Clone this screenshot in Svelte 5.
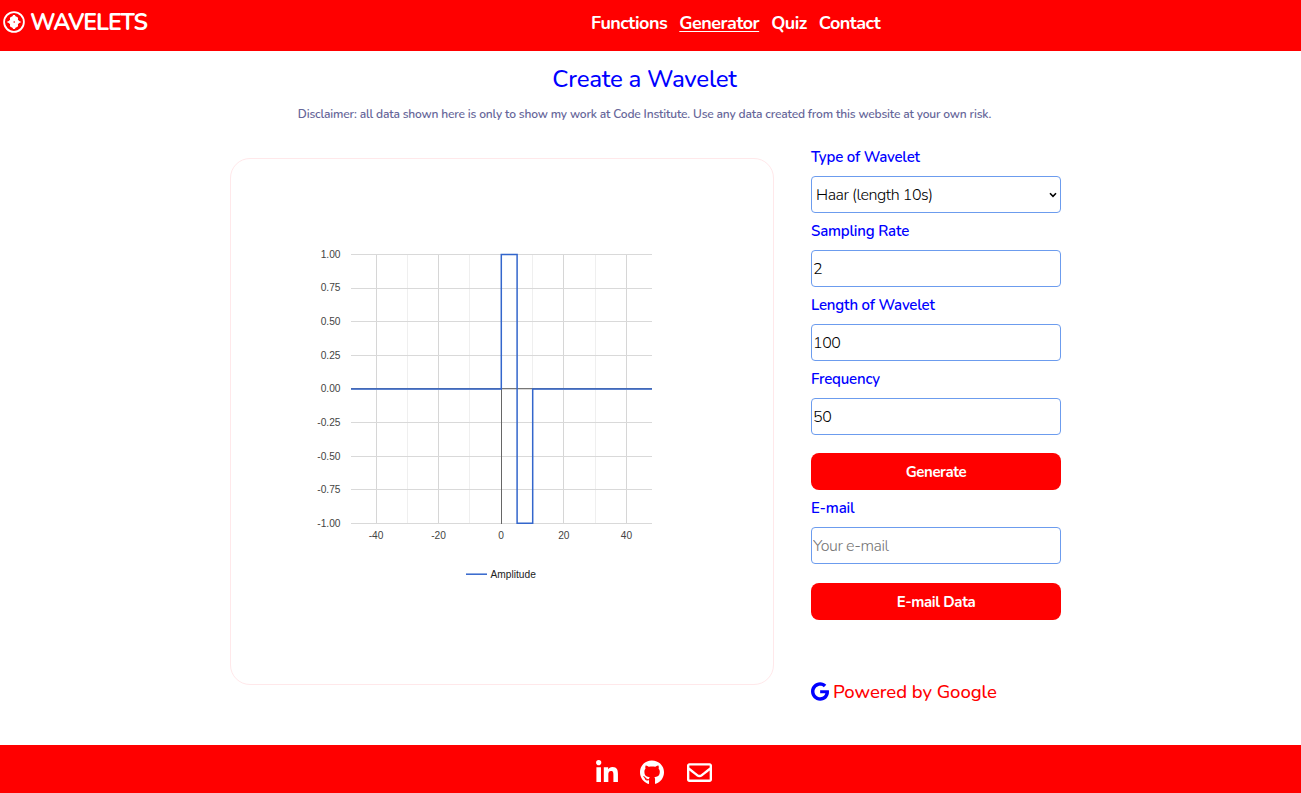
<script>
  const ys = [1, 0.75, 0.5, 0.25, 0, -0.25, -0.5, -0.75, -1];
  const xs = [-40, -20, 0, 20, 40];
  const minor = [-30, -10, 10, 30];
  const px = (v) => 271.2 + v * 3.13;
  const py = (v) => 230.5 - v * 134.5;
  const fields = [
    { label: 'Sampling Rate', value: '2' },
    { label: 'Length of Wavelet', value: '100' },
    { label: 'Frequency', value: '50' }
  ];
</script>

<header>
  <a class="logo" href="#home">
    <svg viewBox="0 0 22 22" width="22" height="22">
      <circle cx="11" cy="11" r="9.9" fill="none" stroke="#fff" stroke-width="1.8" />
      <path fill="#fff" d="M9.2 5.6l1-1.5h1.6l1 1.5 1.6.4.7 1.3-.2 1.5 1.3 1.3 2.2.9-2.2.9-1.3 1.3.2 1.5-.7 1.3-1.6.4-1 1.5h-1.6l-1-1.5-1.6-.4-.7-1.3.2-1.5-1.3-1.3-2.2-.9 2.2-.9 1.3-1.3-.2-1.5.7-1.3z" />
      <circle cx="11.2" cy="11" r=".8" fill="#f00" />
    </svg>
    <span>WAVELETS</span>
  </a>
  <nav>
    <a href="#functions">Functions</a>
    <a class="active" href="#generator">Generator</a>
    <a href="#quiz">Quiz</a>
    <a href="#contact">Contact</a>
  </nav>
</header>

<main>
  <h1>Create a Wavelet</h1>
  <p class="note">Disclaimer: all data shown here is only to show my work at Code Institute. Use any data created from this website at your own risk.</p>
  <div class="content">
    <section class="chart">
      <svg viewBox="0 0 542 525" width="542" height="525">
        {#each minor as v}
          <rect x={Math.floor(px(v)) - 1} y="96" width="1" height="269" fill="#efefef" />
        {/each}
        {#each xs as v}
          <rect x={Math.floor(px(v)) - 1} y="95" width="1" height="270" fill="#d6d6d6" />
          <text x={px(v) - 1} y="380" text-anchor="middle">{v}</text>
        {/each}
        {#each ys as v}
          <rect x="120" y={Math.round(py(v)) - 1} width="301" height="1" fill="#d9d9d9" />
          <text x="109.5" y={py(v) + 2.8} text-anchor="end">{v.toFixed(2)}</text>
        {/each}
        <rect x="270" y="95" width="1" height="270" fill="#666" />
        <rect x="120" y="229" width="301" height="1" fill="#777" />
        <path d="M120 229.9H270.3V95.5H286.1V364.3H301.7V229.9H421" fill="none" stroke="#36c" stroke-width="1.5" />
        <path d="M235 415.2H256" stroke="#36c" stroke-width="1.5" />
        <text class="legend" x="259.5" y="419">Amplitude</text>
      </svg>
    </section>
    <form>
      <label for="type">Type of Wavelet</label>
      <div class="select" id="type">
        <span>Haar (length 10s)</span>
        <svg viewBox="0 0 8 6" width="8" height="6"><path d="M1 1.3l3 3 3-3" fill="none" stroke="#000" stroke-width="1.6" /></svg>
      </div>
      {#each fields as f}
        <label for={f.label}>{f.label}</label>
        <input id={f.label} value={f.value} />
      {/each}
      <button type="button">Generate</button>
      <label for="mail">E-mail</label>
      <input id="mail" placeholder="Your e-mail" />
      <button type="button" class="send">E-mail Data</button>
      <div class="google">
        <svg viewBox="0 0 488 512" width="18" height="19"><path fill="#00f" d="M488 261.8C488 403.3 391.1 504 248 504 110.8 504 0 393.2 0 256S110.8 8 248 8c66.8 0 123 24.5 166.3 64.9l-67.5 64.9C258.5 52.6 94.3 116.6 94.3 256c0 86.5 69.1 156.6 153.7 156.6 98.2 0 135-70.4 140.8-106.9H248v-85.3h236.1c2.3 12.7 3.9 24.9 3.9 41.4z" /></svg>
        <span>Powered by Google</span>
      </div>
    </form>
  </div>
</main>

<footer>
  <svg viewBox="0 0 448 512" width="22" height="25"><path d="M100.28 448H7.4V148.9h92.88zM53.79 108.1C24.09 108.1 0 83.5 0 53.8a53.79 53.79 0 0 1 107.58 0c0 29.7-24.1 54.3-53.79 54.3zM447.9 448h-92.68V302.4c0-34.7-.7-79.2-48.29-79.2-48.29 0-55.69 37.7-55.69 76.7V448h-92.78V148.9h89.08v40.8h1.3c12.4-23.5 42.69-48.3 87.88-48.3 94 0 111.28 61.9 111.28 142.3V448z" /></svg>
  <svg viewBox="0 0 496 512" width="24" height="25"><path d="M165.9 397.4c0 2-2.3 3.6-5.2 3.6-3.3.3-5.6-1.3-5.6-3.6 0-2 2.3-3.6 5.2-3.6 3-.3 5.6 1.3 5.6 3.6zm-31.1-4.5c-.7 2 1.3 4.3 4.3 4.9 2.6 1 5.6 0 6.2-2s-1.3-4.3-4.3-5.2c-2.6-.7-5.5.3-6.2 2.3zm44.2-1.7c-2.9.7-4.9 2.6-4.6 4.9.3 2 2.9 3.3 5.9 2.6 2.9-.7 4.9-2.6 4.6-4.6-.3-1.9-3-3.2-5.9-2.9zM244.8 8C106.1 8 0 113.3 0 252c0 110.9 69.8 205.8 169.5 239.2 12.8 2.3 17.3-5.6 17.3-12.1 0-6.2-.3-40.4-.3-61.4 0 0-70 15-84.7-29.8 0 0-11.4-29.1-27.8-36.6 0 0-22.9-15.7 1.6-15.4 0 0 24.9 2 38.6 25.8 21.9 38.6 58.6 27.5 72.9 20.9 2.3-16 8.8-27.1 16-33.7-55.9-6.2-112.3-14.3-112.3-110.5 0-27.5 7.6-41.3 23.6-58.9-2.6-6.5-11.1-33.3 2.6-67.9 20.9-6.5 69 27 69 27 20-5.6 41.5-8.5 62.8-8.5s42.8 2.9 62.8 8.5c0 0 48.1-33.6 69-27 13.7 34.7 5.2 61.4 2.6 67.9 16 17.7 25.8 31.5 25.8 58.9 0 96.5-58.9 104.2-114.8 110.5 9.2 7.9 17 22.9 17 46.4 0 33.7-.3 75.4-.3 83.6 0 6.5 4.6 14.4 17.3 12.1C428.2 457.8 496 362.9 496 252 496 113.3 383.5 8 244.8 8z" /></svg>
  <svg viewBox="0 0 512 512" width="25" height="25"><path d="M464 64H48C21.49 64 0 85.49 0 112v288c0 26.51 21.49 48 48 48h416c26.51 0 48-21.49 48-48V112c0-26.51-21.49-48-48-48zm0 48v40.805c-22.422 18.259-58.168 46.651-134.587 106.49-16.841 13.247-50.201 45.072-73.413 44.701-23.208.375-56.579-31.459-73.413-44.701C106.18 199.465 70.425 171.067 48 152.805V112h416zM48 400V214.398c22.914 18.251 55.409 43.862 104.938 82.646 21.857 17.205 60.134 55.186 103.062 54.955 42.717.231 80.509-37.199 103.053-54.947 49.528-38.783 82.032-64.401 104.947-82.653V400H48z" /></svg>
</footer>

<style>
  :global(body) { margin: 0; background: #fff; font-family: Nunito, "Noto Sans", sans-serif; }
  :global(#app) { height: 793px; display: flex; flex-direction: column; overflow: hidden; }
  header { height: 51px; background: #f00; display: flex; box-sizing: border-box; padding-left: 3px; flex: none; }
  a { color: #fff; text-decoration: none; white-space: nowrap; }
  .logo { display: flex; width: 588px; align-items: center; gap: 5px; height: 44px; font-size: 23px; font-weight: 700; letter-spacing: -1px; }
  .logo span { padding-top: 1px; }
  nav { display: flex; gap: 12px; height: 46px; line-height: 46px; font-size: 18px; font-weight: 700; letter-spacing: -0.5px; }
  .active { text-decoration: underline; text-decoration-thickness: 1px; text-underline-offset: 2px; }
  main { flex: 1; color: #00f; }
  h1 { margin: 0; padding: 11px 12px 0 0; height: 36px; line-height: 34px; font-size: 24px; font-weight: 500; letter-spacing: -0.25px; text-align: center; }
  .note { margin: 7px 12px 0 0; height: 20px; line-height: 18px; font-size: 12px; font-weight: 600; letter-spacing: -0.167px; color: #669; text-align: center; white-space: nowrap; }
  .content { display: flex; padding-left: 230px; gap: 37px; }
  .chart { width: 542px; height: 525px; margin-top: 33px; border: 1px solid #ffe8ea; border-radius: 20px; }
  .chart svg { display: block; }
  text { font: 10.2px "Liberation Sans", Arial, sans-serif; fill: #444; }
  text.legend { fill: #222; }
  form { width: 250px; padding-top: 18px; display: flex; flex-direction: column; }
  label { height: 33px; line-height: 28px; font-size: 15px; font-weight: 600; letter-spacing: -0.2px; }
  input, .select { box-sizing: border-box; height: 37px; width: 250px; border: 1px solid #6c9cee; border-radius: 4px; margin: 0 0 4px; padding: 0 1px; font-family: inherit; font-size: 16px; font-weight: 300; letter-spacing: -0.45px; color: #000; background: #fff; outline: none; flex: none; }
  .select { display: flex; align-items: center; justify-content: space-between; padding: 0 3px 0 4px; }
  input::placeholder { color: #757575; opacity: 1; }
  button { height: 37px; width: 250px; flex: none; margin: 14px 0 4px; border: 0; border-radius: 8px; background: #f00; color: #fff; font: 700 15px Nunito, "Noto Sans", sans-serif; letter-spacing: -0.4px; padding: 0; }
  .send { margin-top: 15px; }
  .google { display: flex; align-items: center; gap: 4px; height: 28px; margin-top: 53px; font-size: 18.5px; font-weight: 500; letter-spacing: -0.05px; color: #f00; white-space: nowrap; }
  .google span { padding-top: 1px; }
  footer { height: 48.5px; flex: none; background: #f00; display: flex; gap: 22.3px; padding: 15.5px 0 0 596px; box-sizing: border-box; }
  footer svg { fill: #fff; }
</style>
